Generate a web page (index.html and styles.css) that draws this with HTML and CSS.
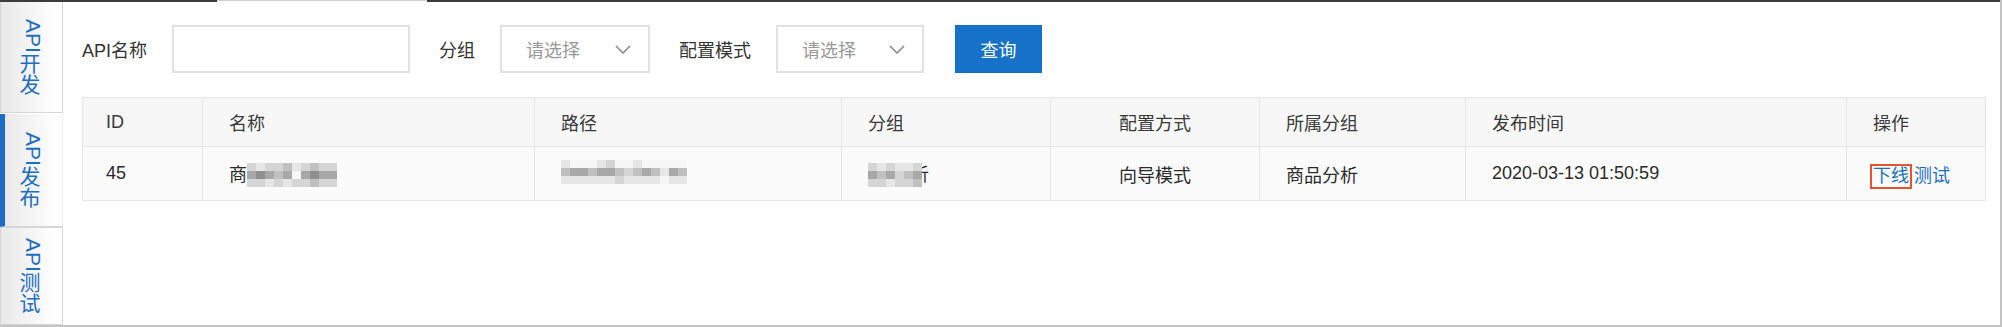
FILE: index.html
```html
<!DOCTYPE html>
<html lang="zh-CN">
<head>
    <meta charset="UTF-8">
    <title>API发布</title>
    <link rel="stylesheet" href="styles.css">
</head>
<body>
    <div class="frame">
        <div class="topline">
            <span class="seg seg-dark seg-first"></span>
            <span class="seg seg-light"></span>
            <span class="seg seg-dark seg-rest"></span>
        </div>

        <div class="layout">
            <nav class="tabs">
                <div class="tab tab-first"><span class="tab-label"><span class="latin">API</span>开发</span></div>
                <div class="tab tab-active"><span class="tab-label"><span class="latin">API</span>发布</span></div>
                <div class="tab tab-last"><span class="tab-label"><span class="latin">API</span>测试</span></div>
            </nav>

            <main class="content">
                <div class="filters">
                    <label class="field-label">API名称</label>
                    <input class="text-input" type="text">

                    <label class="field-label">分组</label>
                    <div class="select">
                        <span class="placeholder">请选择</span>
                        <svg class="chevron" width="16" height="9" viewBox="0 0 16 9"><path d="M1 1 L8 8 L15 1" fill="none" stroke="#8a8a8a" stroke-width="1.6"/></svg>
                    </div>

                    <label class="field-label">配置模式</label>
                    <div class="select select-narrow">
                        <span class="placeholder">请选择</span>
                        <svg class="chevron" width="16" height="9" viewBox="0 0 16 9"><path d="M1 1 L8 8 L15 1" fill="none" stroke="#8a8a8a" stroke-width="1.6"/></svg>
                    </div>

                    <button class="btn-query">查询</button>
                </div>

                <table class="grid">
                    <colgroup>
                        <col class="c-id">
                        <col class="c-name">
                        <col class="c-path">
                        <col class="c-group">
                        <col class="c-mode">
                        <col class="c-owner">
                        <col class="c-time">
                        <col class="c-ops">
                    </colgroup>
                    <thead>
                        <tr>
                            <th class="first">ID</th>
                            <th>名称</th>
                            <th>路径</th>
                            <th>分组</th>
                            <th class="center">配置方式</th>
                            <th>所属分组</th>
                            <th>发布时间</th>
                            <th>操作</th>
                        </tr>
                    </thead>
                    <tbody>
                        <tr>
                            <td class="first">45</td>
                            <td>商<span class="mosaic m-name">
                                <i class="s4"></i><i class="s5"></i><i class="s4"></i><i class="s4"></i><i class="s3"></i><i class="s5"></i><i class="s4"></i><i class="s3"></i><i class="s4"></i><i class="s4"></i>
                                <i class="s2"></i><i class="s1"></i><i class="s2"></i><i class="s3"></i><i class="s2"></i><i class="s6"></i><i class="s2"></i><i class="s1"></i><i class="s2"></i><i class="s2"></i>
                                <i class="s4"></i><i class="s4"></i><i class="s5"></i><i class="s4"></i><i class="s5"></i><i class="s4"></i><i class="s4"></i><i class="s3"></i><i class="s4"></i><i class="s4"></i>
                            </span></td>
                            <td><span class="mosaic m-path">
                                <i class="s5"></i><i class="s6"></i><i class="s6"></i><i class="s6"></i><i class="s5"></i><i class="s4"></i><i class="s6"></i><i class="s6"></i><i class="s5"></i><i class="s6"></i><i class="s6"></i><i class="s6"></i><i class="s6"></i><i class="s6"></i>
                                <i class="s3"></i><i class="s2"></i><i class="s2"></i><i class="s3"></i><i class="s2"></i><i class="s2"></i><i class="s3"></i><i class="s4"></i><i class="s3"></i><i class="s2"></i><i class="s3"></i><i class="s5"></i><i class="s2"></i><i class="s3"></i>
                                <i class="s5"></i><i class="s5"></i><i class="s5"></i><i class="s5"></i><i class="s5"></i><i class="s5"></i><i class="s4"></i><i class="s5"></i><i class="s5"></i><i class="s5"></i><i class="s5"></i><i class="s6"></i><i class="s5"></i><i class="s5"></i>
                            </span></td>
                            <td><span class="mosaic m-group">
                                <i class="s4"></i><i class="s5"></i><i class="s4"></i><i class="s5"></i><i class="s5"></i><i class="s4"></i>
                                <i class="s2"></i><i class="s3"></i><i class="s2"></i><i class="s4"></i><i class="s3"></i><i class="s2"></i>
                                <i class="s4"></i><i class="s4"></i><i class="s5"></i><i class="s4"></i><i class="s4"></i><i class="s3"></i>
                            </span><span class="under-mosaic">析</span></td>
                            <td class="center">向导模式</td>
                            <td>商品分析</td>
                            <td>2020-03-13 01:50:59</td>
                            <td><a class="op op-marked">下线</a> <a class="op">测试</a></td>
                        </tr>
                    </tbody>
                </table>
            </main>
        </div>
    </div>
</body>
</html>
```

FILE: styles.css
```css
* {
    margin: 0;
    padding: 0;
    box-sizing: border-box;
}

body {
    font-family: "Liberation Sans", "Noto Sans CJK SC", sans-serif;
    color: #333;
    background: #fff;
}

.frame {
    width: 2002px;
    height: 327px;
    display: flex;
    flex-direction: column;
    border-right: 2px solid #c4c4c4;
    border-bottom: 2px solid #c4c4c4;
    overflow: hidden;
}

/* thin strip at the very top */
.topline {
    display: flex;
    height: 2px;
    flex-shrink: 0;
}

.seg-dark {
    background: #3d3d3d;
}

.seg-first {
    width: 217px;
}

.seg-light {
    width: 210px;
    border-top: 1px solid #cfcfcf;
}

.seg-rest {
    flex: 1;
}

.layout {
    display: flex;
    flex: 1;
}

/* vertical tabs */
.tabs {
    width: 63px;
    display: flex;
    flex-direction: column;
    flex-shrink: 0;
}

.tab {
    display: flex;
    align-items: center;
    justify-content: center;
    background: linear-gradient(to right, #e9e9e9, #ffffff 92%);
    border: 1px solid #d6d6d6;
    border-top: none;
}

.tab-first {
    height: 111px;
}

.tab-active {
    height: 113px;
    margin-top: 1px;
    border-left: 5px solid #1b6dc1;
    border-right-color: #f0f0f0;
    padding-right: 4px;
}

.tab-last {
    flex: 1;
    border-top: 1px solid #d6d6d6;
}

.tab-label {
    writing-mode: vertical-rl;
    font-family: "Noto Sans CJK SC", sans-serif;
    font-size: 21px;
    line-height: 21px;
    color: #1d6fc2;
}

/* rotated latin sits off-centre in vertical lines, nudge it back */
.tab-label .latin {
    font-family: "Liberation Sans", sans-serif;
    vertical-align: 3px;
}

/* main area */
.content {
    flex: 1;
    padding: 23px 15px 0 19px;
}

.filters {
    display: flex;
    align-items: center;
    height: 48px;
}

.field-label {
    font-size: 18px;
    color: #333;
    margin-right: 25px;
}

.text-input {
    width: 238px;
    height: 48px;
    border: 2px solid #e1e1e1;
    margin-right: 29px;
    outline: none;
}

.select {
    width: 150px;
    height: 48px;
    border: 2px solid #e1e1e1;
    display: flex;
    align-items: center;
    justify-content: space-between;
    padding: 0 17px 0 24px;
    margin-right: 29px;
}

.select-narrow {
    width: 148px;
    margin-right: 31px;
}

.placeholder {
    font-size: 18px;
    color: #999;
}

.btn-query {
    width: 87px;
    height: 48px;
    border: none;
    background: #1672c8;
    color: #fff;
    font-family: inherit;
    font-size: 18px;
}

/* table */
.grid {
    margin-top: 24px;
    width: 1903px;
    border-collapse: collapse;
    table-layout: fixed;
    font-size: 18px;
}

.c-id { width: 120px; }
.c-name { width: 332px; }
.c-path { width: 307px; }
.c-group { width: 209px; }
.c-mode { width: 209px; }
.c-owner { width: 206px; }
.c-time { width: 381px; }
.c-ops { width: 139px; }

.grid th,
.grid td {
    border: 1px solid #e6e6e6;
    text-align: left;
    padding: 0 0 0 26px;
    white-space: nowrap;
}

.grid th {
    height: 49px;
    background: #f7f7f7;
    font-weight: normal;
    color: #3a3a3a;
}

.grid td {
    height: 54px;
    background: #fbfbfb;
    color: #2a2a2a;
}

.grid .first {
    padding-left: 23px;
}

.grid .center {
    text-align: center;
    padding-left: 0;
}

/* pixelated blur */
.mosaic {
    display: inline-grid;
    grid-auto-rows: 8px;
    vertical-align: middle;
    margin-top: -3px;
    position: relative;
    z-index: 1;
}

.m-name { grid-template-columns: repeat(10, 9px); }
.m-path { grid-template-columns: repeat(14, 9px); }
.m-group { grid-template-columns: repeat(6, 9px); }

.s1 { background: #8f8f8f; }
.s2 { background: #a8a8a8; }
.s3 { background: #c0c0c0; }
.s4 { background: #d5d5d5; }
.s5 { background: #e6e6e6; }
.s6 { background: #f6f6f6; }

/* last glyph of the group name, mostly hidden under the blur */
.under-mosaic {
    margin-left: -11px;
}

.op {
    color: #1d6fc2;
    text-decoration: none;
}

.op-marked {
    display: inline-block;
    line-height: 19px;
    outline: 2px solid #e5532f;
    outline-offset: 1px;
}
```
